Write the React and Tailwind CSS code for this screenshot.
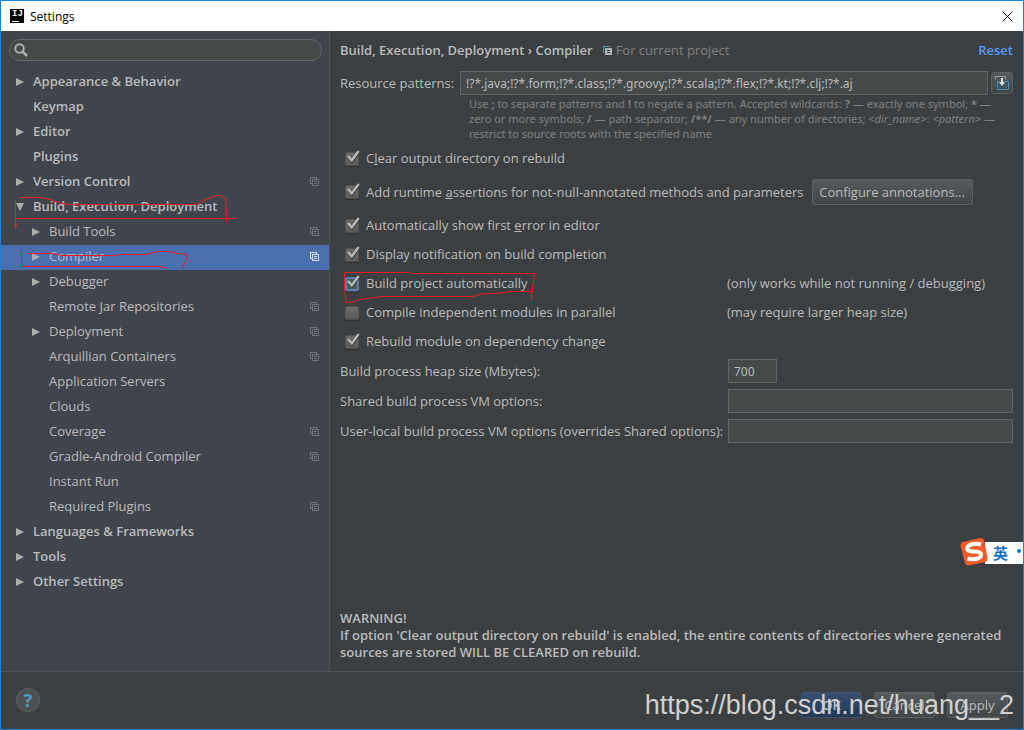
import React, { useState } from 'react';

const tree = [
  { label: 'Appearance & Behavior', arrow: 'right' },
  { label: 'Keymap' },
  { label: 'Editor', arrow: 'right' },
  { label: 'Plugins' },
  { label: 'Version Control', arrow: 'right', project: true },
  { label: 'Build, Execution, Deployment', arrow: 'down' },
  { label: 'Build Tools', arrow: 'right', child: true, project: true },
  { label: 'Compiler', arrow: 'right', child: true, project: true },
  { label: 'Debugger', arrow: 'right', child: true },
  { label: 'Remote Jar Repositories', child: true, project: true },
  { label: 'Deployment', arrow: 'right', child: true, project: true },
  { label: 'Arquillian Containers', child: true, project: true },
  { label: 'Application Servers', child: true },
  { label: 'Clouds', child: true },
  { label: 'Coverage', child: true, project: true },
  { label: 'Gradle-Android Compiler', child: true, project: true },
  { label: 'Instant Run', child: true },
  { label: 'Required Plugins', child: true, project: true },
  { label: 'Languages & Frameworks', arrow: 'right' },
  { label: 'Tools', arrow: 'right' },
  { label: 'Other Settings', arrow: 'right' },
];

function Arrow({ dir }) {
  return (
    <svg className="w-2 h-2 shrink-0" viewBox="0 0 8 8" fill="#adadad">
      {dir === 'right' && <path d="M0 0 L8 4 L0 8 Z" />}
      {dir === 'down' && <path d="M0 0 H8 L4 8 Z" />}
    </svg>
  );
}

function ProjectIcon({ active }) {
  return (
    <svg className="w-[10px] h-[10px] shrink-0" viewBox="0 0 10 10" fill="none" stroke={active ? '#d8dfec' : '#6e7276'} shapeRendering="crispEdges">
      <path d="M2.5 6.5 H0.5 V0.5 H6.5 V2.5" />
      <path d="M2.5 2.5 H8.5 V8.5 H2.5 Z" />
      <path d="M4 4.5 H7 M4 6.5 H7" />
    </svg>
  );
}

function Check({ id, children, checked, focused }) {
  const [on, setOn] = useState(checked);
  return (
    <label htmlFor={id} className="flex items-center pl-[5px] gap-[7px] whitespace-nowrap">
      <span className="relative w-[14px] h-[14px] shrink-0">
        <input
          id={id}
          type="checkbox"
          checked={on}
          onChange={e => setOn(e.target.checked)}
          className={`block appearance-none w-[14px] h-[14px] rounded-xs ${focused ? 'bg-[#55595c] border-2 border-[#5781ae]' : 'bg-linear-to-b from-[#6b6b6b] to-[#5a5a5a] border border-[#4f5152] shadow-[0_1px_0_#2b2d2e]'}`}
        />
        {on && (
          <svg className="absolute left-0 -top-1 w-4 h-4 pointer-events-none" viewBox="0 0 16 16" fill="none">
            <path d="M3.5 9 L7 13.500 L14 4.500" stroke="#2a2a2a" strokeWidth="2" />
            <path d="M3 8 L6.8 12.500 L13.8 3" stroke="#bcbcbc" strokeWidth="2.2" />
          </svg>
        )}
      </span>
      <span>{children}</span>
    </label>
  );
}

const inputClass = "block h-6 min-w-0 bg-[#45494a] border border-[#646464] px-[5px] text-[12px] text-[#bbbbbb] outline-none font-['Noto_Sans',sans-serif]";
const buttonClass = 'bg-linear-to-b from-[#555a5c] to-[#414648] border border-[#5e6060] rounded-[3px]';

export default function App() {
  const [selected, setSelected] = useState('Compiler');

  return (
    <div className="relative min-h-screen flex flex-col overflow-hidden border border-[#1883d7] bg-[#3c3f41] text-[#bbbbbb] text-[13px] leading-[17px] font-['Open_Sans','Noto_Sans',sans-serif]">
      <header className="h-[30px] shrink-0 bg-white text-black flex items-center px-[9px]">
        <span className="w-[14px] h-[14px] bg-black text-white flex flex-col pl-[2px]">
          <span className="text-[9px] leading-[10px] font-bold font-['Liberation_Mono',monospace]">IJ</span>
          <span className="w-[7px] h-px mt-[2px] bg-white" />
        </span>
        <h1 className="ml-[6px] text-[12px]">Settings</h1>
        <button aria-label="Close" className="ml-auto mr-px">
          <svg className="w-[11px] h-[11px]" viewBox="0 0 11 11" stroke="#000" fill="none">
            <path d="M0.5 0.5 L10.5 10.5 M10.5 0.5 L0.5 10.5" />
          </svg>
        </button>
      </header>

      <div className="flex flex-1">
        <aside className="w-[329px] shrink-0 bg-[#40444d] border-r border-[#515355] pt-2">
          <div className="ml-2 mr-[7px] mb-[9px] h-[22px] flex items-center gap-1 rounded-full bg-[#45494a] border border-[#646464] px-1">
            <svg className="w-[14px] h-[14px] shrink-0" viewBox="0 0 14 14" fill="none" stroke="#adadad">
              <circle cx="5.5" cy="5.5" r="4.2" strokeWidth="2" />
              <path d="M8.5 8.5 L13 13" strokeWidth="2.6" />
            </svg>
            <input aria-label="Search settings" className="flex-1 min-w-0 outline-none" />
          </div>
          <nav>
            {tree.map(item => {
              const active = item.label === selected;
              return (
                <button
                  key={item.label}
                  onClick={() => setSelected(item.label)}
                  className={`w-full h-[25px] flex items-center gap-[9px] pr-[9px] pb-[2px] text-left whitespace-nowrap ${item.child ? 'pl-[31px]' : 'pl-[15px] font-semibold'} ${active ? 'bg-[#4b6eaf]' : ''}`}
                >
                  <Arrow dir={item.arrow} />
                  <span className="flex-1">{item.label}</span>
                  {item.project && <ProjectIcon active={active} />}
                </button>
              );
            })}
          </nav>
        </aside>

        <main className="flex-1 min-w-0 flex flex-col px-[10px] pt-[10px] pb-[10px]">
          <div className="flex items-center mb-[11px] h-[19px]">
            <h2 className="font-semibold">Build, Execution, Deployment › Compiler</h2>
            <svg className="ml-[10px] mr-[3px] w-[10px] h-[10px]" viewBox="0 0 10 10" fill="none" shapeRendering="crispEdges">
              <path d="M0.5 7 V0.5 H7" stroke="#5a93ad" />
              <path d="M2 2 H9 V9 H2 Z" fill="#afb1b3" />
              <path d="M4 4.5 H7 M4 6.5 H7" stroke="#3c3f41" />
            </svg>
            <span className="text-[#808080]">For current project</span>
            <a href="#reset" className="ml-auto font-semibold text-[#589df6]">Reset</a>
          </div>

          <div className="flex items-center">
            <label htmlFor="patterns" className="w-[120px] shrink-0 whitespace-nowrap">Resource patterns:</label>
            <input id="patterns" className={`${inputClass} flex-1`} defaultValue="!?*.java;!?*.form;!?*.class;!?*.groovy;!?*.scala;!?*.flex;!?*.kt;!?*.clj;!?*.aj" />
            <button aria-label="Expand patterns" className={`${buttonClass} ml-[3px] w-[22px] h-[22px] flex items-center justify-center`}>
              <svg className="w-[14px] h-[14px] shrink-0" viewBox="0 0 14 14" fill="none">
                <path d="M4 5.500 H2.500 V13.500 H13.500 V5.500 H10" stroke="#4592b5" />
                <path d="M4 7 H12 V12 H4 Z" fill="#3d5865" />
                <path d="M0.500 3.500 V0.500 H10.500 V3.500" stroke="#9a9da0" />
                <path d="M6 2 H8 V6 H10 L7 10 L4 6 H6 Z" fill="#e0e0e0" />
              </svg>
            </button>
          </div>
          <p className="pl-[129px] pt-px text-[11px] leading-[15px] text-[#808080] whitespace-nowrap font-['Noto_Sans',sans-serif]">
            Use <b>;</b> to separate patterns and <b>!</b> to negate a pattern. Accepted wildcards: <b>?</b> — exactly one symbol; <b>*</b> —<br />
            zero or more symbols; <b>/</b> — path separator; <b>/**/</b> — any number of directories; <i>&lt;dir_name&gt;</i>: <i>&lt;pattern&gt;</i> —<br />
            restrict to source roots with the specified name
          </p>

          <div className="grid grid-cols-[387px_1fr] auto-rows-[29px] grid-rows-[29px_38px] items-center mt-[3px]">
            <div className="col-span-2">
              <Check id="clear" checked>C<u>l</u>ear output directory on rebuild</Check>
            </div>
            <div className="col-span-2 flex items-center gap-2">
              <Check id="assertions" checked>Add runtime <u>a</u>ssertions for not-null-annotated methods and parameters</Check>
              <button className={`${buttonClass} h-[26px] w-[161px] whitespace-nowrap`}>Configure annotations...</button>
            </div>
            <div className="col-span-2">
              <Check id="first-error" checked>Automatically show first <u>e</u>rror in editor</Check>
            </div>
            <div className="col-span-2">
              <Check id="notify" checked>Display notification on build completion</Check>
            </div>
            <Check id="auto" checked focused>Build project automatically</Check>
            <span>(only works while not running / debugging)</span>
            <Check id="parallel" checked={false}>Compile independent modules in parallel</Check>
            <span>(may require larger heap size)</span>
            <div className="col-span-2">
              <Check id="rebuild" checked>Rebuild module on dependency change</Check>
            </div>
          </div>
          <div className="grid grid-cols-[388px_1fr] auto-rows-[30px] items-center whitespace-nowrap">
            <label htmlFor="heap">Build process heap size (Mbytes):</label>
            <input id="heap" className={`${inputClass} w-[49px]`} defaultValue="700" />
            <label htmlFor="shared">Shared build process VM options:</label>
            <input id="shared" className={`${inputClass} w-full`} />
            <label htmlFor="local">User-local build process VM options (overrides Shared options):</label>
            <input id="local" className={`${inputClass} w-full`} />
          </div>

          <p className="mt-auto font-semibold">
            WARNING!<br />
            If option 'Clear output directory on rebuild' is enabled, the entire contents of directories where generated sources are stored WILL BE CLEARED on rebuild.
          </p>
        </main>
      </div>

      <footer className="h-[58px] shrink-0 border-t border-[#515355] flex items-start justify-between pl-[15px] pr-[15px] pt-4">
        <button aria-label="Help" className="w-6 h-6 rounded-full bg-[#4c5052] border border-[#5e6060] text-[#4a9cc4] text-[18px] leading-[20px] font-bold">?</button>
        <div className="flex gap-3 pt-1">
          <button className="w-[61px] h-[26px] rounded-[3px] border border-[#3f5272] bg-linear-to-b from-[#384f6f] to-[#253854] font-semibold">OK</button>
          <button className={`${buttonClass} w-[61px] h-[26px]`}>Cancel</button>
          <button className={`${buttonClass} w-[61px] h-[26px]`}>Apply</button>
        </div>
      </footer>

      {/* pen marks */}
      <svg className="absolute -left-px -top-px w-[560px] h-[320px] pointer-events-none" viewBox="0 0 560 320" fill="none" stroke="#ed1c24">
        <path d="M20 197.5 H40 L50 199.5 L57 202 L68 204.5 H196 L206 199.5 L216 195.5 H221 L226 200 L226.5 222 M15.5 200 V230 L16.5 223 M15.5 218.5 H237" />
        <path d="M20 251.5 L21.5 252 V267.5 M28 253.5 H52 L62 255.5 H117 L118 254.5 H147 L157 251.5 H168 L178 253.5 L187.5 254.5 L186 261 L182 268 M21 266.5 H160 L168 268.5" />
        <path d="M344 272.5 H354 M355 272.5 H410 L411 273.5 H534.5 L531 302 M344.5 272 V290 L346.5 302.5 L353 302 L359 299.5 L382 296.5 H472 L482 294 L500 293 L510 291.5 H531" />
      </svg>

      {/* input method bar */}
      <div className="absolute right-[-1px] top-[541px] w-[39px] h-[22px] bg-white text-[#1470c6] flex items-center pl-2 overflow-hidden">
        <span className="text-[15px] leading-[22px] font-bold font-['Noto_Sans_CJK_SC',sans-serif]">英</span>
        <span className="ml-[9px] mb-1 w-1 h-1 rounded-full bg-[#1470c6] shrink-0" />
      </div>
      <svg className="absolute right-[35px] top-[536px] w-[28px] h-[30px] pointer-events-none" viewBox="0 0 28 30">
        <path d="M3 5 L20 1 Q23 0.500 24 3 L27.500 21 Q28 24 25 25 L9 28.500 Q6 29 5 26 L0.500 9 Q0 6 3 5 Z" fill="#f15a29" />
        <path d="M21 7.500 C14 5.500 6 8 7.500 12.500 C9 16.500 20 12.500 21 17 C22 22 13 23 7.500 21.500" fill="none" stroke="#fff" strokeWidth="4" />
      </svg>

      <div className="absolute right-[9px] bottom-[8px] text-[27px] leading-[32px] text-[#d0d0d0] whitespace-nowrap pointer-events-none font-['Liberation_Sans',sans-serif]">https://blog.csdn.net/huang__2</div>
    </div>
  );
}
